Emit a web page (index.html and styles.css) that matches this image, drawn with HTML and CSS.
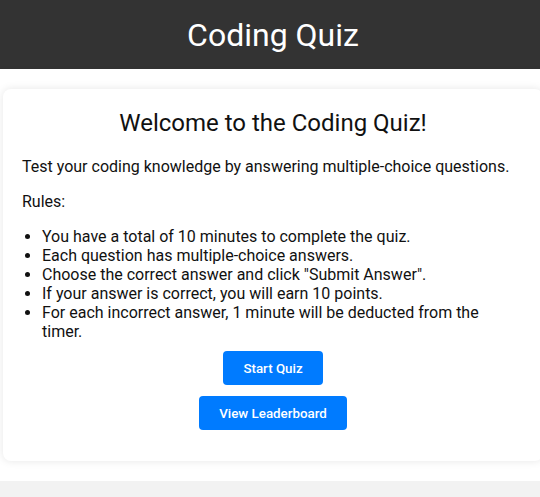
FILE: index.html
```html
<!DOCTYPE html>
<html lang="en">
<head>
<meta charset="utf-8">
<title>Coding Quiz</title>
<link rel="stylesheet" href="styles.css">
</head>
<body>
<div class="frame">
  <header class="site-header">
    <h1 class="site-title">Coding Quiz</h1>
  </header>
  <main class="page">
    <section class="card">
      <h2 class="card-title">Welcome to the Coding Quiz!</h2>
      <p class="text">Test your coding knowledge by answering multiple-choice questions.</p>
      <p class="text">Rules:</p>
      <ul class="rules">
        <li>You have a total of 10 minutes to complete the quiz.</li>
        <li>Each question has multiple-choice answers.</li>
        <li>Choose the correct answer and click "Submit Answer".</li>
        <li>If your answer is correct, you will earn 10 points.</li>
        <li>For each incorrect answer, 1 minute will be deducted from the timer.</li>
      </ul>
      <div class="actions">
        <button class="btn" type="button">Start Quiz</button>
        <button class="btn" type="button">View Leaderboard</button>
      </div>
    </section>
  </main>
</div>
</body>
</html>
```

FILE: styles.css
```css
* { box-sizing: border-box; }

html, body {
  margin: 0;
  padding: 0;
  overflow-x: hidden;
}

body {
  background: #f2f2f2;
  font-family: Roboto, "Liberation Sans", sans-serif;
  color: #111;
}

.frame {
  width: 546px;
}

.site-header {
  background: #333333;
  color: #fff;
  text-align: center;
  padding: 16px 0 15px;
}

.site-title {
  margin: 0;
  font-size: 32px;
  font-weight: 400;
  line-height: 38px;
}

.page {
  background: #fff;
  padding: 20px 3px;
  box-shadow: 0 2px 6px rgba(0, 0, 0, 0.08);
}

.card {
  background: #fff;
  border-radius: 8px;
  box-shadow: 0 0 8px rgba(0, 0, 0, 0.1);
  padding: 20px 19px;
}

.card-title {
  margin: 0 0 20px;
  text-align: center;
  font-size: 24px;
  font-weight: 400;
  line-height: 28px;
}

.text {
  margin: 0 0 16px;
  font-size: 16px;
  line-height: 19px;
}

.rules {
  margin: 0;
  padding: 0 30px 0 20px;
  font-size: 16px;
  line-height: 19px;
}

.actions {
  display: flex;
  flex-direction: column;
  align-items: center;
  gap: 11px;
  padding-top: 10px;
  padding-bottom: 11px;
}

.btn {
  background: #007bff;
  color: #fff;
  border: 0;
  border-radius: 4px;
  padding: 10px 20px 9px;
  font-family: Roboto, "Liberation Sans", sans-serif;
  font-size: 13.333px;
  font-weight: 500;
  line-height: 15px;
}
```
